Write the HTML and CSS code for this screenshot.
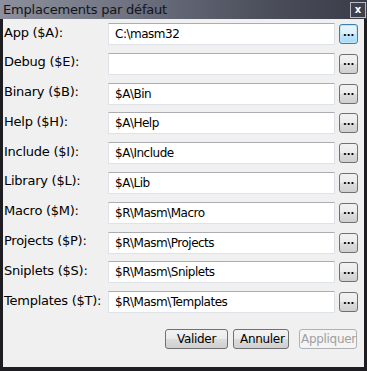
FILE: index.html
```html
<!DOCTYPE html>
<html>
<head>
<meta charset="utf-8">
<link rel="stylesheet" href="styles.css">
</head>
<body>
<div class="window">
  <div class="titlebar">
    <span class="title">Emplacements par défaut</span>
    <span class="close">x</span>
  </div>
  <div class="content">
    <div class="rows">
      <div class="row"><span class="label">App ($A):</span><div class="field">C:\masm32</div><button class="dots focus">...</button></div>
      <div class="row"><span class="label">Debug ($E):</span><div class="field"></div><button class="dots">...</button></div>
      <div class="row"><span class="label">Binary ($B):</span><div class="field">$A\Bin</div><button class="dots">...</button></div>
      <div class="row"><span class="label">Help ($H):</span><div class="field">$A\Help</div><button class="dots">...</button></div>
      <div class="row"><span class="label">Include ($I):</span><div class="field">$A\Include</div><button class="dots">...</button></div>
      <div class="row"><span class="label">Library ($L):</span><div class="field">$A\Lib</div><button class="dots">...</button></div>
      <div class="row"><span class="label">Macro ($M):</span><div class="field">$R\Masm\Macro</div><button class="dots">...</button></div>
      <div class="row"><span class="label">Projects ($P):</span><div class="field">$R\Masm\Projects</div><button class="dots">...</button></div>
      <div class="row"><span class="label">Sniplets ($S):</span><div class="field">$R\Masm\Sniplets</div><button class="dots">...</button></div>
      <div class="row"><span class="label">Templates ($T):</span><div class="field">$R\Masm\Templates</div><button class="dots">...</button></div>
    </div>
    <div class="actions">
      <button class="btn">Valider</button>
      <button class="btn">Annuler</button>
      <button class="btn disabled">Appliquer</button>
    </div>
  </div>
</div>
</body>
</html>
```
FILE: styles.css
```css
* { box-sizing: border-box; }
html, body { margin: 0; padding: 0; background: #f0f0f0; }
body { font-family: "DejaVu Sans", "Liberation Sans", sans-serif; font-size: 12px; color: #000; }
.window {
  width: 367px;
  height: 371px;
  background: #f0f0f0;
  border-left: 3px solid #1e1e22;
  border-right: 3px solid #1e1e22;
  border-bottom: 4px solid #1e1e22;
  display: flex;
  flex-direction: column;
}
.titlebar {
  height: 19px;
  margin: 0 -3px;
  background: linear-gradient(to right, #8d909c 0%, #6f7280 35%, #4d505d 70%, #3a3c48 100%);
  display: flex;
  align-items: center;
  justify-content: space-between;
  padding: 0 1px 0 3px;
}
.title { font-family: "DejaVu Sans", sans-serif; font-size: 13px; color: #141418; letter-spacing: -0.2px; }
.close {
  width: 16px; height: 16px;
  border: 1px solid #b8bac4;
  background: #3e404c;
  color: #fff;
  font-size: 10px; font-weight: bold;
  display: flex; align-items: center; justify-content: center;
  line-height: 1;
}
.content { flex: 1; display: flex; flex-direction: column; padding: 4px 6px 0 1px; }
.rows { display: flex; flex-direction: column; gap: 7.8px; }
.row { display: flex; align-items: center; height: 22px; }
.label { width: 105px; font-size: 13px; letter-spacing: -0.25px; position: relative; top: -2px; white-space: nowrap; }
.field {
  width: 229px; height: 22px;
  background: #fff;
  border: 1px solid #dfe3e8;
  border-top-color: #abadb3;
  padding: 3px 6px 0 6px;
  font-size: 12px;
  letter-spacing: -0.5px;
}
.dots {
  margin-left: 4px;
  width: 19px; height: 20px;
  border: 1px solid #707070;
  border-radius: 3px;
  background: linear-gradient(#f2f2f2 0%, #ebebeb 50%, #dddddd 51%, #cfcfcf 100%);
  font: bold 10px "DejaVu Sans", sans-serif;
  padding: 0 0 3px 0;
  color: #000;
  line-height: 1;
}
.dots.focus {
  border-color: #3c7fb1;
  background: linear-gradient(#eaf6fd 0%, #d9f0fc 50%, #bee6fd 51%, #a7d9f5 100%);
  box-shadow: inset 0 0 0 1px #c0e4f8;
}
.actions { display: flex; justify-content: flex-end; gap: 5px; margin-top: 16px; padding-right: 1px; }
.btn {
  height: 20px;
  border: 1px solid #707070;
  border-radius: 3px;
  background: linear-gradient(#f2f2f2 0%, #ebebeb 50%, #dddddd 51%, #cfcfcf 100%);
  font: 12px "DejaVu Sans", sans-serif;
  letter-spacing: -0.3px;
  color: #000;
  padding: 0 6px;
}
.btn:nth-child(1) { width: 63px; }
.btn:nth-child(2) { width: 56px; margin-right: 5px; }
.btn.disabled {
  width: 58px;
  padding: 0 1px;
  color: #a0a0a0;
  border-color: #adb2b5;
  background: #f4f4f4;
}
```
